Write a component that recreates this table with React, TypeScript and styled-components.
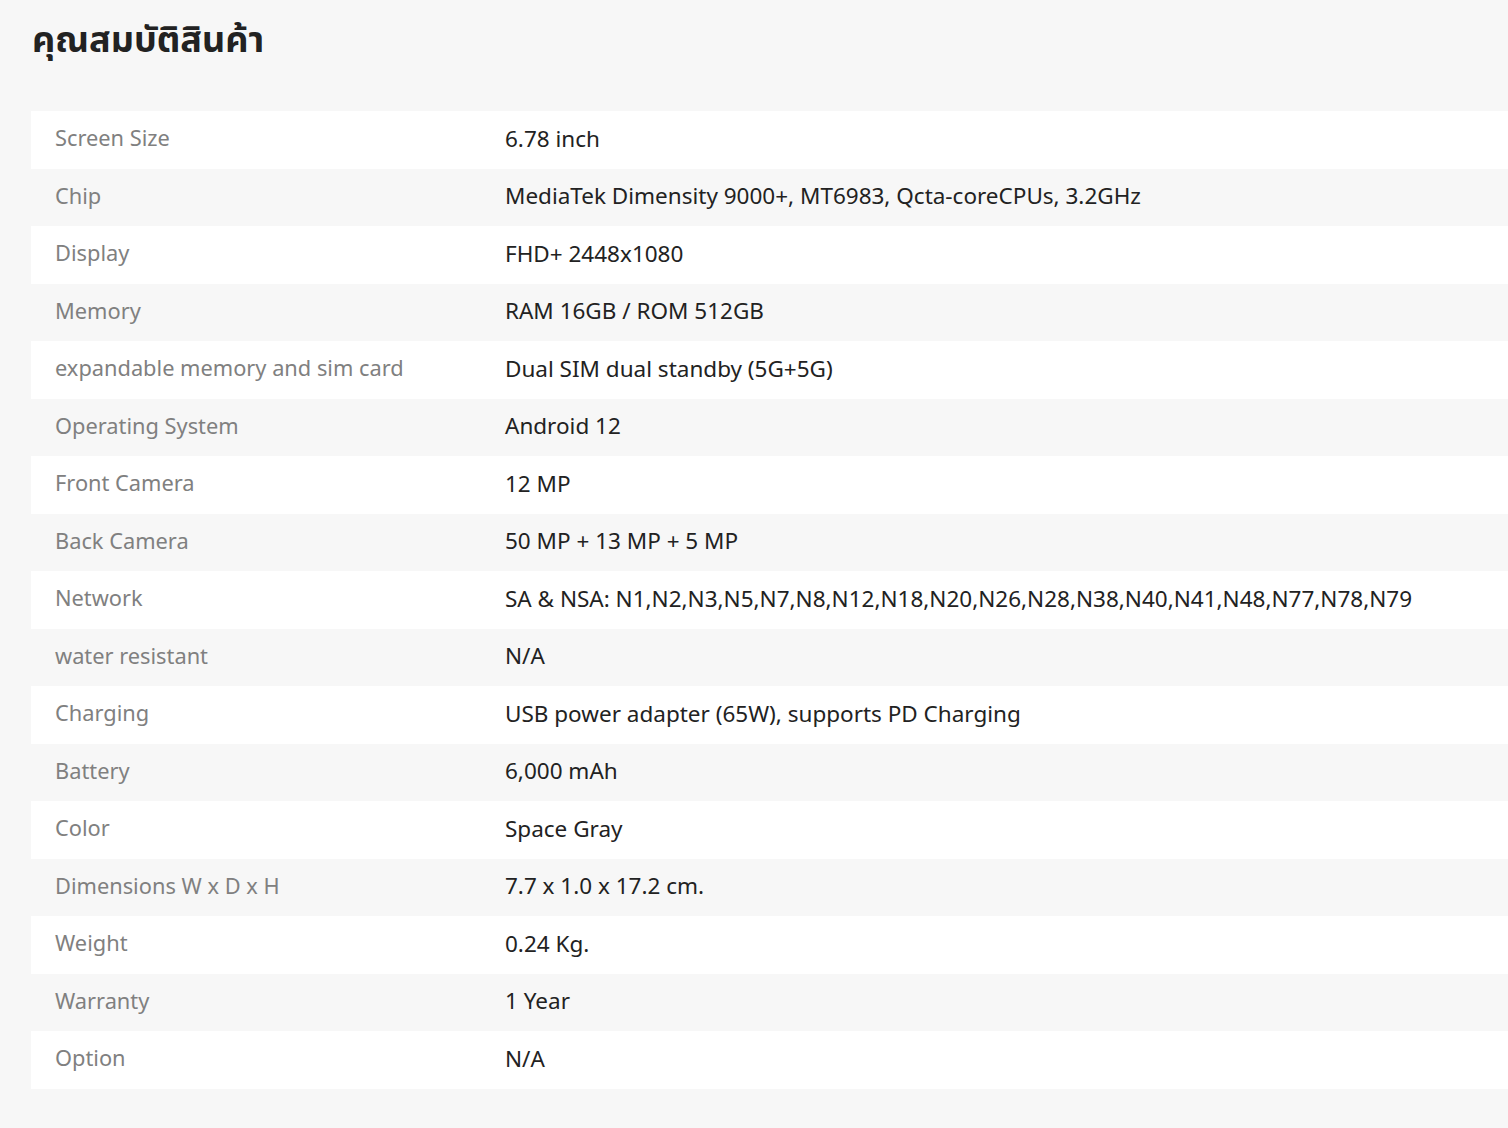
import React from "react";
import styled, { createGlobalStyle } from "styled-components";

const GlobalStyle = createGlobalStyle`
  html, body {
    margin: 0;
    padding: 0;
    background: #f7f7f7;
    font-family: "Noto Sans Thai", "Noto Sans", "DejaVu Sans", sans-serif;
  }
`;

const Page = styled.div`
  padding: 12px 0 38px 31px;
  overflow: hidden;
`;

const Title = styled.h2`
  margin: 0 0 41px 1px;
  font-size: 36px;
  font-weight: 700;
  line-height: 58px;
  color: #222;
`;

const SpecTable = styled.div`
  display: flex;
  flex-direction: column;
`;

const Row = styled.div<{ $striped: boolean }>`
  display: grid;
  grid-template-columns: 450px 1fr;
  align-items: center;
  height: 57.5px;
  background: ${(p) => (p.$striped ? "#f7f7f7" : "#ffffff")};
`;

const Label = styled.div`
  padding: 0 24px;
  font-size: 21.8px;
  color: #808080;
`;

const Value = styled.div`
  padding: 0 24px;
  font-size: 22.5px;
  color: #222;
  white-space: nowrap;
`;

const specs: [string, string][] = [
  ["Screen Size", "6.78 inch"],
  ["Chip", "MediaTek Dimensity 9000+, MT6983, Qcta-coreCPUs, 3.2GHz"],
  ["Display", "FHD+ 2448x1080"],
  ["Memory", "RAM 16GB / ROM 512GB"],
  ["expandable memory and sim card", "Dual SIM dual standby (5G+5G)"],
  ["Operating System", "Android 12"],
  ["Front Camera", "12 MP"],
  ["Back Camera", "50 MP + 13 MP + 5 MP"],
  ["Network", "SA & NSA: N1,N2,N3,N5,N7,N8,N12,N18,N20,N26,N28,N38,N40,N41,N48,N77,N78,N79"],
  ["water resistant", "N/A"],
  ["Charging", "USB power adapter (65W), supports PD Charging"],
  ["Battery", "6,000 mAh"],
  ["Color", "Space Gray"],
  ["Dimensions W x D x H", "7.7 x 1.0 x 17.2 cm."],
  ["Weight", "0.24 Kg."],
  ["Warranty", "1 Year"],
  ["Option", "N/A"],
];

const App: React.FC = () => {
  return (
    <Page>
      <GlobalStyle />
      <Title>คุณสมบัติสินค้า</Title>
      <SpecTable>
        {specs.map(([label, value], i) => (
          <Row key={label} $striped={i % 2 === 1}>
            <Label>{label}</Label>
            <Value>{value}</Value>
          </Row>
        ))}
      </SpecTable>
    </Page>
  );
};

export default App;
